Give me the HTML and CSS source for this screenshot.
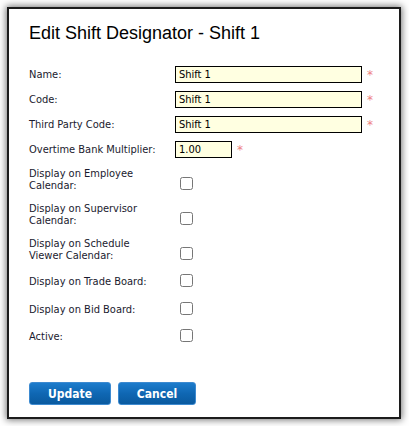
FILE: index.html
```html
<!DOCTYPE html>
<html>
<head>
<meta charset="utf-8">
<link rel="stylesheet" href="styles.css">
</head>
<body>
<div class="dialog">
  <h1 class="title">Edit Shift Designator - Shift 1</h1>
  <div class="form">
    <div class="row row-input">
      <label class="lbl">Name:</label>
      <div class="field"><input class="txt txt-long" type="text" value="Shift 1"><span class="req">*</span></div>
    </div>
    <div class="row row-input">
      <label class="lbl">Code:</label>
      <div class="field"><input class="txt txt-long" type="text" value="Shift 1"><span class="req">*</span></div>
    </div>
    <div class="row row-input">
      <label class="lbl">Third Party Code:</label>
      <div class="field"><input class="txt txt-long" type="text" value="Shift 1"><span class="req">*</span></div>
    </div>
    <div class="row row-input">
      <label class="lbl">Overtime Bank Multiplier:</label>
      <div class="field"><input class="txt txt-short" type="text" value="1.00"><span class="req">*</span></div>
    </div>
    <div class="row row-double">
      <label class="lbl">Display on Employee<br>Calendar:</label>
      <div class="field"><input class="chk chk-low" type="checkbox"></div>
    </div>
    <div class="row row-double">
      <label class="lbl">Display on Supervisor<br>Calendar:</label>
      <div class="field"><input class="chk chk-low" type="checkbox"></div>
    </div>
    <div class="row row-double">
      <label class="lbl">Display on Schedule<br>Viewer Calendar:</label>
      <div class="field"><input class="chk chk-low" type="checkbox"></div>
    </div>
    <div class="row row-trade">
      <label class="lbl">Display on Trade Board:</label>
      <div class="field"><input class="chk chk-high" type="checkbox"></div>
    </div>
    <div class="row row-bid">
      <label class="lbl">Display on Bid Board:</label>
      <div class="field"><input class="chk chk-high" type="checkbox"></div>
    </div>
    <div class="row row-active">
      <label class="lbl">Active:</label>
      <div class="field"><input class="chk chk-high" type="checkbox"></div>
    </div>
  </div>
  <div class="buttons">
    <button class="btn btn-update">Update</button>
    <button class="btn btn-cancel">Cancel</button>
  </div>
</div>
</body>
</html>
```
FILE: styles.css
```css
html, body {
  margin: 0;
  padding: 0;
  background: #ffffff;
}
body {
  padding: 7px;
  font-family: Tahoma, "DejaVu Sans Condensed", "Liberation Sans", sans-serif;
}
.dialog {
  box-sizing: border-box;
  width: 394px;
  height: 412px;
  border: 2px solid #1c1c1c;
  background: #ffffff;
  box-shadow: 0 0 7px 1px rgba(0, 0, 0, 0.55);
  padding: 14px 20px 0 20px;
}
.title {
  margin: 0;
  font-family: "Liberation Sans", Arial, sans-serif;
  font-weight: normal;
  font-size: 18px;
  line-height: 20px;
  color: #000000;
}
.form {
  margin-top: 19px;
}
.row {
  display: grid;
  grid-template-columns: 146px auto;
  align-items: center;
}
.row-input { height: 25px; }
.row-double { height: 35px; }
.row-trade { height: 30px; }
.row-bid { height: 26px; }
.row-active { height: 27px; }
.lbl {
  font-size: 11px;
  line-height: 12px;
  color: #1a1a2e;
}
.field {
  display: flex;
  align-items: center;
}
.txt {
  box-sizing: border-box;
  height: 17px;
  margin: 0;
  padding: 0 3px;
  border: 1px solid #000000;
  background: #ffffe1;
  font-family: Tahoma, "DejaVu Sans Condensed", "Liberation Sans", sans-serif;
  font-size: 11px;
  color: #000000;
  outline: none;
}
.txt-long { width: 187px; }
.txt-short { width: 57px; }
.req {
  margin-left: 5px;
  color: #ee7f7f;
  font-size: 12px;
  line-height: 12px;
  font-family: "DejaVu Sans", sans-serif;
}
.chk {
  width: 13px;
  height: 13px;
  margin: 0 0 0 5px;
}
.chk-low { margin-top: 8px; }
.chk-high { margin-bottom: 3px; }
.buttons {
  display: flex;
  gap: 7px;
  margin-top: 32px;
}
.btn {
  box-sizing: border-box;
  height: 23px;
  padding: 0;
  border: 1px solid #3d8ad0;
  border-radius: 3px;
  background: linear-gradient(to bottom, #1d7ccc 0%, #0f67b3 50%, #0a5a9f 100%);
  color: #ffffff;
  font-family: Tahoma, "DejaVu Sans Condensed", "Liberation Sans", sans-serif;
  font-weight: bold;
  font-size: 12px;
}
.btn-update { width: 82px; }
.btn-cancel { width: 78px; }
```
